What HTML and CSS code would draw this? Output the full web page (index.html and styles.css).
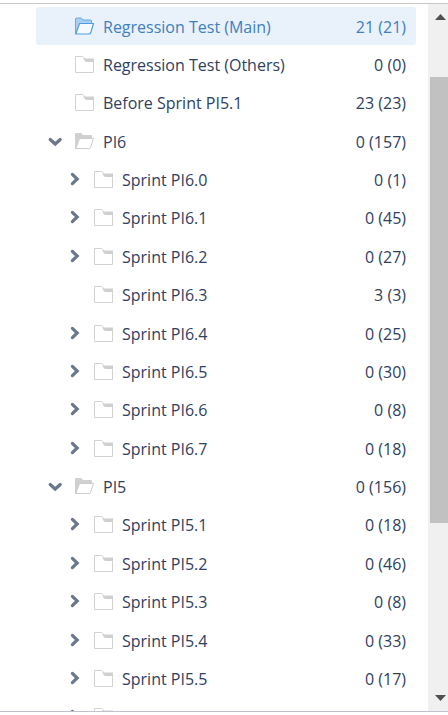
FILE: index.html
```
<!DOCTYPE html>
<html lang="en">
<head>
<meta charset="utf-8">
<meta name="viewport" content="width=device-width, initial-scale=1">
<title>Test folders</title>
<link rel="stylesheet" href="styles.css">
</head>
<body>
<svg class="sprites" aria-hidden="true">
  <symbol id="closed" viewBox="0 -1 19 18">
    <path d="M.5 .5H7.5Q8.4 .5 8.8 1.5L9.5 3.5H18.5V16.5H.5Z" fill="#fff" stroke="#d2d2d2"/>
    <path d="M8.4 2.5H19V6H12Q10.3 6 9.6 4.8Z" fill="#cfcfcf"/>
  </symbol>
  <symbol id="open" viewBox="0 -1 19 18">
    <path d="M0 1Q0 0 1 0H6L8 2H16Q17 2 17 3V6L4 7L1 16H0Z" fill="#d0d0d0"/>
    <path d="M4.5 5.5H18.5L15.5 14.5Q15.2 15.5 14 15.5H.8Z" fill="#fff" stroke="#cccccc"/>
  </symbol>
  <symbol id="selected" viewBox="0 -1 19 18">
    <path d="M.5 15.5V1Q.5 0 1.5 0H6.3L8 2H15.5Q16.5 2 16.5 3V7L4 9Z" fill="#a9d0f2" stroke="#64aaea"/>
    <path d="M4.5 5.5H18.5L15.7 14.8Q15.3 16 14.2 16H.8Z" fill="#f5faff" stroke="#4f9de8" stroke-width="1.2"/>
  </symbol>
  <symbol id="down" viewBox="0 0 20 20">
    <path d="M5.2 8.5L10.2 13L15.2 8.5" fill="none" stroke="#6b778c" stroke-width="3.2" stroke-linecap="round"/>
  </symbol>
  <symbol id="right" viewBox="0 0 20 20">
    <path d="M8.4 5.4L13.2 10L8.4 14.6" fill="none" stroke="#6b778c" stroke-width="3.2" stroke-linecap="round"/>
  </symbol>
</svg>
<main class="panel">
  <ul class="tree" id="tree"></ul>
  <div class="scrollbar">
    <button class="arrow" type="button" aria-label="Scroll up"><svg viewBox="0 0 11 6"><path d="M5.5 0L11 6H0Z"/></svg></button>
    <div class="track"><div class="before"></div><div class="thumb"></div><div class="after"></div></div>
    <button class="arrow" type="button" aria-label="Scroll down"><svg viewBox="0 0 11 6"><path d="M0 0H11L5.5 6Z"/></svg></button>
  </div>
</main>
<script src="tree.js"></script>
</body>
</html>
```
FILE: styles.css
```
* {
  box-sizing: border-box;
}

body {
  margin: 0;
  background: #fff;
  color: #30415f;
  font-family: "Open Sans", "Noto Sans", sans-serif;
  font-size: 16px;
  font-weight: 400;
}

button {
  padding: 0;
  border: 0;
  background: none;
}

svg {
  display: block;
}

.sprites {
  display: none;
}

.panel {
  display: flex;
  height: calc(100vh - 6px);
  margin: 3px 0;
  border-top: 1px solid #c8c8c8;
  border-bottom: 1px solid #c1c3cb;
  overflow: hidden;
}

.tree {
  flex: 1;
  min-width: 0;
  margin: 0;
  padding: 3px 12px 0 36px;
  list-style: none;
}

.row {
  display: flex;
  align-items: center;
  height: 38px;
  padding: 0 10px 0 9px;
  border-radius: 3px;
}

.row:nth-child(8n + 3),
.row:nth-child(8n + 6),
.row:nth-child(8n + 8) {
  margin-bottom: 1px;
}

.child {
  padding-left: 28px;
}

.current {
  background: #e9f1fa;
  color: #4080c0;
}

.toggle {
  flex: none;
  width: 20px;
  height: 20px;
  margin-right: 10px;
}

.toggle svg {
  width: 20px;
  height: 20px;
}

.folder {
  flex: none;
  width: 19px;
  height: 18px;
  margin-right: 9px;
}

.name,
.count {
  padding-top: 2px;
  line-height: 24px;
  white-space: nowrap;
}

.name {
  flex: 1;
  overflow: hidden;
  color: inherit;
  text-decoration: none;
}

.scrollbar {
  display: flex;
  flex: none;
  flex-direction: column;
  width: 20px;
  padding: 10px 0;
  background: #f0f0f0;
}

.arrow {
  width: 11px;
  height: 6px;
  margin-left: 7px;
}

.arrow svg {
  width: 11px;
  height: 6px;
  fill: #505050;
}

.track {
  display: flex;
  flex: 1;
  flex-direction: column;
  padding-left: 2px;
}

.before {
  flex: 57;
}

.thumb {
  flex: 446;
  background: #c1c1c1;
}

.after {
  flex: 172;
}
```
FILE: tree.js
```
const items = [
  ["Regression Test (Main)", "21 (21)", "selected", ""],
  ["Regression Test (Others)", "0 (0)", "closed", ""],
  ["Before Sprint PI5.1", "23 (23)", "closed", ""],
  ["PI6", "0 (157)", "open", "down"],
  ["Sprint PI6.0", "0 (1)", "closed", "right", 1],
  ["Sprint PI6.1", "0 (45)", "closed", "right", 1],
  ["Sprint PI6.2", "0 (27)", "closed", "right", 1],
  ["Sprint PI6.3", "3 (3)", "closed", "", 1],
  ["Sprint PI6.4", "0 (25)", "closed", "right", 1],
  ["Sprint PI6.5", "0 (30)", "closed", "right", 1],
  ["Sprint PI6.6", "0 (8)", "closed", "right", 1],
  ["Sprint PI6.7", "0 (18)", "closed", "right", 1],
  ["PI5", "0 (156)", "open", "down"],
  ["Sprint PI5.1", "0 (18)", "closed", "right", 1],
  ["Sprint PI5.2", "0 (46)", "closed", "right", 1],
  ["Sprint PI5.3", "0 (8)", "closed", "right", 1],
  ["Sprint PI5.4", "0 (33)", "closed", "right", 1],
  ["Sprint PI5.5", "0 (17)", "closed", "right", 1],
  ["", "", "closed", "right", 1]
];

document.getElementById("tree").innerHTML = items.map(([name, count, icon, toggle, child]) => `
  <li class="row${child ? " child" : ""}${icon === "selected" ? " current" : ""}">
    ${toggle
      ? `<button class="toggle" type="button" aria-label="Toggle ${name}"><svg><use href="#${toggle}"/></svg></button>`
      : `<span class="toggle"></span>`}
    <svg class="folder" aria-hidden="true"><use href="#${icon}"/></svg>
    ${name ? `<a class="name" href="#">${name}</a><span class="count">${count}</span>` : ""}
  </li>`).join("");
```
